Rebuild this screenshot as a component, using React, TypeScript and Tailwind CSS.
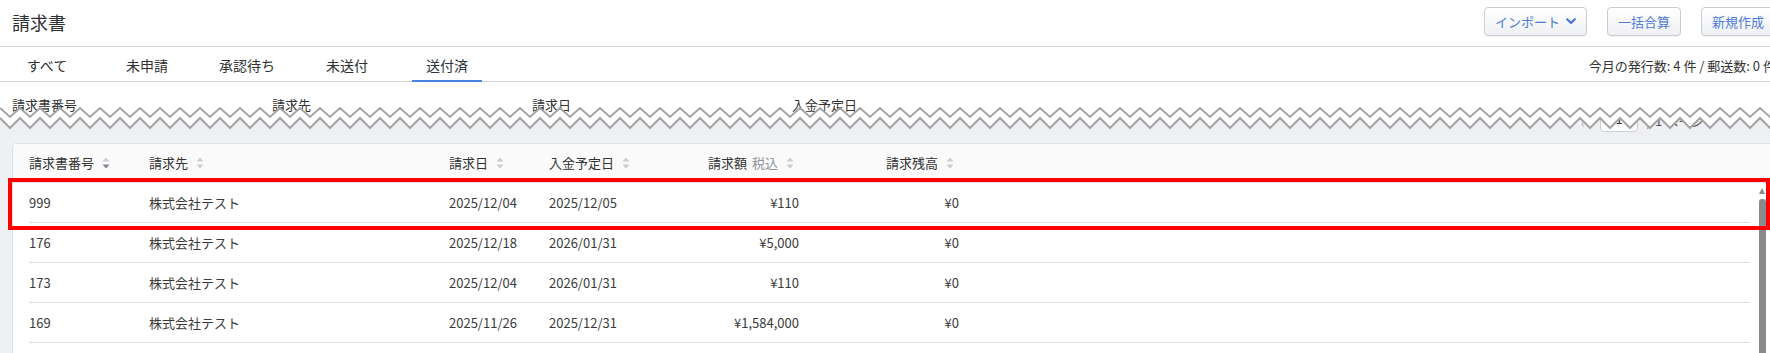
const tabs = ['すべて', '未申請', '承認待ち', '未送付', '送付済']

const rows = [
  { no: '999', client: '株式会社テスト', issued: '2025/12/04', due: '2025/12/05', amount: '¥110', balance: '¥0' },
  { no: '176', client: '株式会社テスト', issued: '2025/12/18', due: '2026/01/31', amount: '¥5,000', balance: '¥0' },
  { no: '173', client: '株式会社テスト', issued: '2025/12/04', due: '2026/01/31', amount: '¥110', balance: '¥0' },
  { no: '169', client: '株式会社テスト', issued: '2025/11/26', due: '2025/12/31', amount: '¥1,584,000', balance: '¥0' },
  { no: '', client: '', issued: '', due: '', amount: '', balance: '' }
]

function SortIcon({ active }: { active?: boolean }) {
  return (
    <svg width="8" height="12" viewBox="0 0 8 12" className="ml-2 shrink-0">
      <path d="M4 0.5 L7.5 4.5 L0.5 4.5 Z" fill="#c9ccd2" />
      <path d="M4 11.5 L7.5 7.5 L0.5 7.5 Z" fill={active ? '#80858f' : '#c9ccd2'} />
    </svg>
  )
}

function Zigzag() {
  const period = 20
  const count = Math.ceil(1770 / period) + 1
  const top: string[] = []
  const bottom: string[] = []
  for (let i = 0; i <= count; i++) {
    const x = i * period
    top.push(`${x},3`, `${x + period / 2},12`)
    bottom.push(`${x},13`, `${x + period / 2},23`)
  }
  const band = [...top, ...bottom.slice().reverse()].join(' ')
  return (
    <svg width="1770" height="26" className="absolute left-0 top-[105px]">
      <polygon points={band} fill="#ffffff" />
      <polyline points={top.join(' ')} fill="none" stroke="#a4a4a4" strokeWidth="2" />
      <polyline points={bottom.join(' ')} fill="none" stroke="#a4a4a4" strokeWidth="2" />
    </svg>
  )
}

function Button({ children }: { children: React.ReactNode }) {
  return (
    <button className="h-[29px] px-[10px] flex items-center gap-[6px] rounded-[4px] border border-[#c9cdd4] bg-gradient-to-b from-white to-[#eef0f3] text-[13px] text-[#4f7bd6] shadow-[0_1px_1px_rgba(0,0,0,0.06)]">
      {children}
    </button>
  )
}

export default function App() {
  return (
    <div className="relative w-[1770px] h-[353px] overflow-hidden bg-white text-[#333] font-['Noto_Sans_CJK_JP','Noto_Sans',sans-serif]">
      {/* ヘッダー */}
      <div className="h-[47px] border-b border-[#d6d8dd] flex items-center justify-between pl-3 pb-[3px]">
        <h1 className="text-[18px] leading-none text-[#303133]">請求書</h1>
        <div className="flex items-center gap-5 mr-[-5px]">
          <Button>
            インポート
            <svg width="10" height="7" viewBox="0 0 10 7">
              <polyline points="1.2,1.2 5,5 8.8,1.2" fill="none" stroke="currentColor" strokeWidth="2.2" strokeLinecap="round" strokeLinejoin="round" />
            </svg>
          </Button>
          <Button>一括合算</Button>
          <Button>新規作成</Button>
        </div>
      </div>

      {/* タブ */}
      <div className="h-[35px] border-b border-[#d6d8dd] flex items-stretch justify-between pl-3">
        <div className="flex gap-[30px]">
          {tabs.map((tab) => (
            <div
              key={tab}
              className={`w-[70px] flex items-center justify-center pt-[3px] text-[14px] -mb-px ${tab === '送付済' ? 'border-b-2 border-[#4a82e4] text-[#2f3542]' : 'border-b-2 border-transparent text-[#303133]'}`}
            >
              {tab}
            </div>
          ))}
        </div>
        <div className="flex items-center pt-[3px] mr-[-6px] text-[13px] text-[#333]">
          今月の発行数: 4 件 / 郵送数: 0 件
        </div>
      </div>

      {/* 固定ヘッダー（切り取り） */}
      <div className="h-[36px] flex items-start pl-3 pt-[15px] text-[13px] leading-[16px] text-[#333]">
        <div className="w-[260px]">請求書番号</div>
        <div className="w-[260px]">請求先</div>
        <div className="w-[260px]">請求日</div>
        <div className="w-[260px]">入金予定日</div>
      </div>

      {/* 一覧 */}
      <div className="bg-[#eff0f4] h-[300px]">
        <div className="h-[14px] overflow-hidden flex items-end justify-end pr-[37px] gap-[9px] text-[13px] text-[#555]">
          <span className="text-[#b0b3b8] leading-[18px] mr-[6px]">‹</span>
          <div className="w-[38px] h-[26px] rounded-[4px] border border-[#c9cdd4] bg-white flex items-center justify-center text-[#333]">1</div>
          <span className="w-[86px] leading-[22px]">/ 1 ページ</span>
        </div>

        <div className="mt-[11px] ml-3 w-[1770px] border border-[#dcdfe4] rounded-[4px] bg-white">
          <div className="h-[39px] bg-[#fafafa] border-b border-[#e3e5ea] flex items-center pl-4 text-[13px] text-[#333] rounded-t-[4px]">
            <div className="w-[120px] flex items-center">請求書番号<SortIcon active /></div>
            <div className="w-[300px] flex items-center">請求先<SortIcon /></div>
            <div className="w-[100px] flex items-center">請求日<SortIcon /></div>
            <div className="w-[100px] flex items-center">入金予定日<SortIcon /></div>
            <div className="w-[150px] flex items-center justify-end pr-[5px]">
              請求額<span className="ml-[5px] text-[#8e939c]">税込</span><SortIcon />
            </div>
            <div className="w-[160px] flex items-center justify-end pr-[5px]">請求残高<SortIcon /></div>
          </div>

          <div className="ml-4 mr-[31px]">
            {rows.map((row, i) => (
              <div key={i} className="h-[40px] border-b border-[#dcdde3] flex items-center text-[13px] text-[#3a3a3a]">
                <div className="w-[120px]">{row.no}</div>
                <div className="w-[300px]">{row.client}</div>
                <div className="w-[100px]">{row.issued}</div>
                <div className="w-[100px]">{row.due}</div>
                <div className="w-[150px] text-right">{row.amount}</div>
                <div className="w-[160px] text-right">{row.balance}</div>
              </div>
            ))}
          </div>
        </div>
      </div>

      <Zigzag />

      {/* スクロールバー */}
      <div className="absolute left-[1759px] top-[188px] w-0 h-0 border-l-[3.5px] border-r-[3.5px] border-b-[6px] border-l-transparent border-r-transparent border-b-[#8a8a8a]" />
      <div className="absolute left-[1759px] top-[199px] w-[7px] h-[160px] rounded-t-[3px] bg-[#8a8a8a]" />

      {/* 強調枠 */}
      <div className="absolute left-[8px] top-[178px] w-[1762px] h-[52px] border-4 border-[#ff0000]" />
    </div>
  )
}
